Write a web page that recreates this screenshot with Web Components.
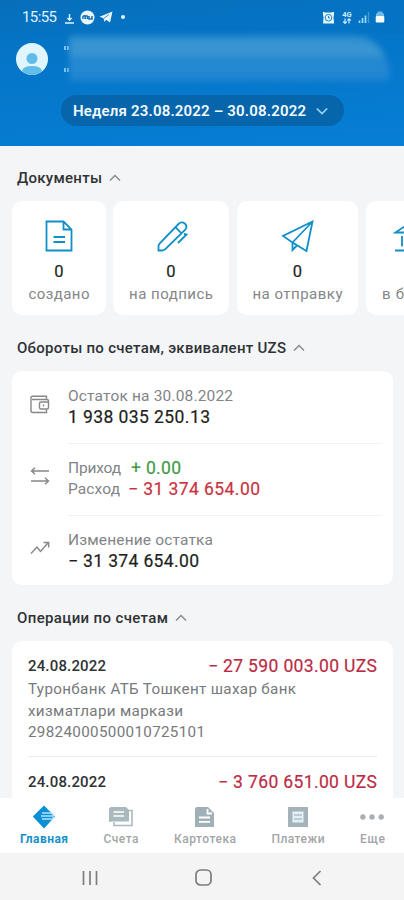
<!DOCTYPE html>
<html lang="ru">
<head>
<meta charset="utf-8">
<title>Главная</title>
<style>
html,body{margin:0;height:100%;overflow:hidden;background:#f3f5f7}
body{font-family:Roboto,"Noto Sans",sans-serif}
</style>
</head>
<body>
<bank-app></bank-app>
<script>
const define=(name,html,after)=>{
  const t=document.createElement('template');t.innerHTML=html;
  customElements.define(name,class extends HTMLElement{
    constructor(){super();this.attachShadow({mode:'open'}).append(t.content.cloneNode(true));}
    connectedCallback(){if(after)after(this,this.shadowRoot);}
  });
};

/* One line of text, tracked so that it spans the width in its "w" attribute. */
define('t-line',`<style>
:host{display:block;white-space:nowrap;flex:none;font-size:var(--s,15.5px);line-height:var(--lh,21px)}
span{display:inline-block;vertical-align:top}
</style><span><slot></slot></span>`,(el,r)=>{
  const w=+el.getAttribute('w'),n=el.textContent.length,s=r.querySelector('span');
  if(w&&n>1){
    s.style.letterSpacing='0px';
    const d=(w-s.getBoundingClientRect().width)/(n-1);
    s.style.letterSpacing=d.toFixed(3)+'px';
    s.style.marginRight=(-d).toFixed(3)+'px';
  }
});

const icons={
  doc:['28 32','<path d="M1.500 1.500h17l8 8v21h-25zM18.500 1.500v8h8M8.500 17h11.500M8.500 22h11.500"/>'],
  pen:['32 32','<path d="M7 30.500H3.500V25.500L5 23 23.500 4Q26.500 1 29.800 3.500Q33 6.500 30 10L10 29.500zM20.500 7.200l6 6.200M29 14l2.500.5-8.500 8.500"/>'],
  plane:['32 32','<path d="M30.500 1.500L1 16l9.500 6.500L24.500 31zM30.500 1.500L10.500 22.500v7.500l4.500-4.500"/>'],
  bank:['34 32','<path d="M1.500 12.500L17 2l15.500 10.500zM8 16v10.500M17 16v10.500M26 16v10.500M1 30.500h32"/>'],
  wallet:['20 19','<path d="M16.500 4.500V1.200H2.500Q1 1.200 1 3v12.500q0 2 2 2h13.500V14M2 4.500h15q1.500 0 1.500 1.500v6.500q0 1.500-1.500 1.500H11q-1.500 0-1.500-1.500V8.500Q9.500 7 11 7h7.500"/><path d="M13.500 9.500v2"/>'],
  swap:['20 18','<path d="M19 4H1.500M5 .8L1.500 4 5 7.200M1 14h17.500M15 10.800l3.500 3.200-3.500 3.200"/>'],
  trend:['20 14','<path d="M1 12.500L7 6l3.500 4.500L18 2M13.500 1.500H18.700V6.500"/>'],
  up:['12 8','<path d="M1 6.500L6 1.500l5 5"/>'],
  down:['12 8','<path d="M.8 1.500L6 6.500l5.200-5"/>'],
  download:['11 12','<path d="M5.500 2v6M3.500 6l2 2.200L7.500 6M1 11h9"/>'],
  chat:['15 15','<circle cx="7.500" cy="7.500" r="7" fill="#e8f7ff" stroke="none"/><path stroke="#1272b8" stroke-width="1.500" d="M3 9V6.500q1.200-1.500 2.200 0V9m0-2.500q1.200-1.500 2.200 0V9M9 6v3h3V6"/>'],
  tg:['14 12','<path fill="#e8f7ff" stroke="none" d="M13.500.5L11 11.500 7 8.700 5.500 11 4.500 7.200.5 5.700z"/><path stroke="#1272b8" stroke-width=".8" d="M5 7.300l5-3.800"/>'],
  alarm:['13 13','<path fill="#dff6ff" stroke="none" d="M1 .8l2.500.7h6L12 .8v3l-.5 2.700.7 6H1l.6-6L1 3.800z"/><circle cx="6.500" cy="6.700" r="3.300" stroke="#1475bc" stroke-width=".9"/><path stroke="#1475bc" stroke-width=".9" d="M6.500 5v2h1.500"/>'],
  arrows:['10 6','<path stroke-width="1.200" d="M3 .5v4.500M1.200 3.500L3 5.300l1.800-1.800M7 5.500V1M5.500 2.500L7 .8l1.800 1.700"/>'],
  signal:['12 12','<path stroke-width="1.700" stroke="#9bdcf5" d="M1.500 12V9.500M4.500 12V7M7.500 12V4.500"/><path stroke="#3f9ad4" d="M10.500 12V1"/>'],
  battery:['10 12','<path fill="#6fbbe6" stroke="none" d="M3 .5h4l1 2h1v3H1v-3h1z"/><rect x=".7" y="5" width="8.600" height="6.500" rx="1" fill="#f4fbff" stroke="none"/>'],
  home:['24 24','<path fill="#0b8fd6" stroke="none" d="M12 .5L23 11.500 12 23.500.800 11.500z"/><path stroke="#b6e2fb" stroke-width="1.400" d="M10 8h8q3 0 4 3.500M9 11h12M10 14h10l2-2"/>'],
  accounts:['24 22','<path fill="#aab9be" stroke="none" d="M1.500 1H17l3 3v11.500H4L0 16V2.500z"/><path stroke="#fff" stroke-width="1.600" d="M4.500 6h10.500M4.500 10h10.500"/><path stroke="#aab9be" stroke-width="1.600" d="M20 4.500h3V19.500H5V16"/>'],
  file:['20 20','<path fill="#9fb0b6" stroke="none" d="M1.500 0H13l6 6v14H0V1.500z"/><path stroke="#fff" stroke-width="1.800" d="M4 10.500h11M4 14.800h11M12.500 2v4.500H17"/>'],
  receipt:['20 20','<path fill="#a3b3b9" stroke="none" d="M0 0h20v20H0z"/><path fill="#e5f0f5" stroke="none" d="M4.500 4.500h11v11h-11z"/><path stroke="#93aab3" stroke-width="1.200" d="M6 8h8M6 12h8"/>'],
  more:['24 6','<g fill="#a9afb2" stroke="none"><circle cx="2.900" cy="3" r="2.700"/><circle cx="12" cy="3" r="2.700"/><circle cx="21.200" cy="3" r="2.700"/></g>'],
  recent:['16 16','<path stroke-width="1.700" d="M1.500 1v14M8 1v14M14.500 1v14"/>'],
  homekey:['17 17','<rect x="1" y="1" width="15" height="15" rx="4.500"/>'],
  back:['10 16','<path d="M8.500 1L1.500 8l7 7"/>'],
  avatar:['32 32','<circle cx="16" cy="16" r="16" fill="#dff5ff" stroke="none"/><g fill="#62bce8" stroke="none"><circle cx="16" cy="15.500" r="5.500"/><path d="M6 28q1-5 10-5t10 5Q16 36 6 28z"/></g>']
};
define('x-icon',`<style>:host{display:block;flex:none}svg{display:block;fill:none;stroke:currentColor;stroke-width:var(--sw,1.4);overflow:visible}</style><div></div>`,(el,r)=>{
  const [box,body]=icons[el.getAttribute('name')],[w,h]=box.split(' ');
  r.querySelector('div').innerHTML=`<svg width="${w}" height="${h}" viewBox="0 0 ${box}">${body}</svg>`;
});

define('status-bar',`<style>
:host{display:flex;align-items:center;height:34px;padding:0 19px 0 22px;box-sizing:border-box;background:#0568b61f;color:#e0f4ff}
t-line{--s:15px}
.g{flex:1}.dot{width:4px;height:4px;border-radius:50%;background:#e8f7ff;margin-left:8px}
.net{display:flex;flex-direction:column;align-items:center;font:700 7.5px/7px Roboto,sans-serif;margin:0 6px 0 7px;color:#c9edfd}
</style><t-line w="35">15:55</t-line><x-icon name="download" style="margin:1px 5px 0 7px"></x-icon><x-icon name="chat"></x-icon><x-icon name="tg" style="margin-left:4px"></x-icon><i class="dot"></i><div class="g"></div><x-icon name="alarm"></x-icon><div class="net">4G<x-icon name="arrows"></x-icon></div><x-icon name="signal"></x-icon><x-icon name="battery" style="margin-left:5px"></x-icon>`);

define('app-header',`<style>
:host{display:block;height:146px;flex:none;color:#f2fbff;background:linear-gradient(175deg,#0670be 0,#0577ca 45%,#067fd5 100%);overflow:hidden}
.user{display:flex;height:50px;padding-left:16px;align-items:center}
.q{margin:0 0 0 16px;display:grid;gap:18px}.q i{height:4px;border:solid #8bc8ef;border-width:0 2px;box-sizing:border-box;width:5px}
.mask{width:321px;height:46px;border-radius:2px 36px 4px 2px/2px 46px 4px 2px;background:linear-gradient(#2f90d0 0,#3c97d2 36%,#2388d0 50%,#2589d4 78%,#1680d0 100%);filter:blur(3px)}
.pill{margin:11px 0 0 61px;width:283px;height:31px;border-radius:16px;background:#0765ab;display:flex;align-items:center;padding-left:12px;box-sizing:border-box}
t-line{--s:15px;font-weight:600;margin-right:10px;position:relative;top:.5px}
</style><status-bar></status-bar><div class="user"><x-icon name="avatar"></x-icon><div class="q"><i></i><i></i></div><div class="mask"></div></div>
<div class="pill"><t-line w="233">Неделя 23.08.2022 – 30.08.2022</t-line><x-icon name="down" style="--sw:1.7;color:#9bd6f8"></x-icon></div>`);

define('section-title',`<style>
:host{display:flex;align-items:center;gap:7px;height:22px;padding-left:17px;color:#303234;font-weight:500;--s:15px}
x-icon{color:#85888b}</style><slot></slot><x-icon name="up"></x-icon>`);

define('doc-card',`<style>
:host{display:flex;flex:none;flex-direction:column;align-items:center;height:114px;padding-top:19px;box-sizing:border-box;background:#fff;border-radius:10px;color:#848688;--s:15px}
x-icon{color:#1090c9;--sw:1.8}
b{font:400 16.5px/20px Roboto,sans-serif;color:#1d1f20;margin:10px 0 2px;-webkit-text-stroke:.2px}
.i{height:32px}
</style><div class="i"></div><b>0</b><slot></slot>`,(el,r)=>{
  r.querySelector('.i').innerHTML=`<x-icon name="${el.getAttribute('icon')}"></x-icon>`;
});

define('balance-row',`<style>
:host{display:flex;height:73px;box-sizing:border-box;padding:15px 0 0 18px;color:#828486}
.ic{width:38px;height:36px;display:flex;align-items:center}
x-icon{color:#858789;--sw:1.4}
.b{flex:1;height:57px;border-bottom:1px solid #f1f2f3;margin-right:12px}
:host([last]) .b{border:0}
</style><div class="ic"></div><div class="b"><slot></slot></div>`,(el,r)=>{
  r.querySelector('.ic').innerHTML=`<x-icon name="${el.getAttribute('icon')}"></x-icon>`;
});

define('white-card',`<style>:host{display:block;margin:0 11px 0 12px;background:#fff;border-radius:10px;box-sizing:border-box}</style><slot></slot>`);

define('operation-row',`<style>
:host{display:block;margin:0 16px 0 16px;padding-top:14px;height:116px;box-sizing:border-box;color:#77797b;--s:15.2px;--lh:21.7px}
.h{display:flex;justify-content:space-between;align-items:center;height:22px;padding:1px 0;color:#303234}
.rule{height:1px;background:#ebecee;margin:11.500px 0 0}
</style><div class="h"><slot name="date"></slot><slot name="sum"></slot></div><slot></slot><div class="rule"></div>`);

define('nav-item',`<style>
:host{display:flex;flex:none;flex-direction:column;align-items:center;color:#a2a6a8;--s:12px;--lh:16px;font-weight:500}
:host([active]){color:#1591c9;font-weight:700}
.i{height:30px;padding-top:1px;box-sizing:border-box;display:flex;align-items:center}
</style><div class="i"></div><slot></slot>`,(el,r)=>{
  r.querySelector('.i').innerHTML=`<x-icon name="${el.getAttribute('icon')}"></x-icon>`;
});

define('tab-bar',`<style>
:host{display:flex;justify-content:space-between;height:55px;flex:none;background:#fff;padding:3px 19px 0 20px;box-sizing:border-box}
</style>
<nav-item icon="home" active><t-line w="48">Главная</t-line></nav-item>
<nav-item icon="accounts"><t-line w="35">Счета</t-line></nav-item>
<nav-item icon="file"><t-line w="62">Картотека</t-line></nav-item>
<nav-item icon="receipt"><t-line w="53">Платежи</t-line></nav-item>
<nav-item icon="more"><t-line w="25">Еще</t-line></nav-item>`);

define('system-keys',`<style>
:host{display:grid;grid-template-columns:180px 47px 1fr;align-items:center;height:47px;flex:none;background:#f4f4f4;color:#7c7c7c;--sw:1.7;padding-top:2px;box-sizing:border-box}
x-icon{justify-self:center}x-icon:last-child{justify-self:start;margin-left:85px}
</style><x-icon name="recent"></x-icon><x-icon name="homekey"></x-icon><x-icon name="back"></x-icon>`);

define('bank-app',`<style>
:host{display:flex;flex-direction:column;width:404px;height:900px;overflow:hidden;background:#f3f5f7}
main{flex:1;min-height:0;overflow:hidden;padding-top:21px}
.docs{display:flex;padding:12px 0 0 12px;overflow:hidden}
.lg{--s:17.5px;color:#1d1f20}.dark{color:#303234}
.line{display:flex;height:21px}
.green{color:#3e9b45}.red{color:#c9343f}
.pay{color:#bb2b44;--s:17.5px}
.lg,.pay,.green,.red{-webkit-text-stroke:.2px}
</style>
<app-header></app-header>
<main>
<section-title><t-line w="85">Документы</t-line></section-title>
<div class="docs">
<doc-card icon="doc" style="width:94px;margin-right:7px"><t-line w="61">создано</t-line></doc-card>
<doc-card icon="pen" style="width:116px;margin-right:8px"><t-line w="84">на подпись</t-line></doc-card>
<doc-card icon="plane" style="width:121px;margin-right:8px"><t-line w="90">на отправку</t-line></doc-card>
<doc-card icon="bank" style="width:90px"><t-line w="58">в банке</t-line></doc-card>
</div>
<section-title style="margin-top:22px"><t-line w="269">Обороты по счетам, эквивалент UZS</t-line></section-title>
<white-card style="margin-top:12px;height:214px">
<balance-row icon="wallet" style="height:72px"><t-line w="165">Остаток на 30.08.2022</t-line><t-line class="lg" w="142">1 938 035 250.13</t-line></balance-row>
<balance-row icon="swap"><div class="line"><t-line w="53">Приход</t-line><t-line class="green" style="--s:17.5px;margin-left:10px" w="50">+ 0.00</t-line></div><div class="line"><t-line w="52">Расход</t-line><t-line class="red" style="--s:17.5px;margin-left:8px" w="132">− 31 374 654.00</t-line></div></balance-row>
<balance-row icon="trend" last style="height:69px;padding-top:14px"><t-line w="145">Изменение остатка</t-line><t-line class="lg" w="131">− 31 374 654.00</t-line></balance-row>
</white-card>
<section-title style="margin-top:22px"><t-line w="151">Операции по счетам</t-line></section-title>
<white-card style="margin-top:12px;height:240px;overflow:hidden">
<operation-row><t-line slot="date" class="dark" w="78" style="--s:15px;font-weight:500">24.08.2022</t-line><t-line slot="sum" class="pay" w="169">− 27 590 003.00 UZS</t-line><t-line w="268">Туронбанк АТБ Тошкент шахар банк</t-line><t-line w="155">хизматлари маркази</t-line><t-line w="177">29824000500010725101</t-line></operation-row>
<operation-row><t-line slot="date" class="dark" w="78" style="--s:15px;font-weight:500">24.08.2022</t-line><t-line slot="sum" class="pay" w="159">− 3 760 651.00 UZS</t-line><t-line w="268">Туронбанк АТБ Тошкент шахар банк</t-line></operation-row>
</white-card>
</main>
<tab-bar></tab-bar>
<system-keys></system-keys>`);
</script>
</body>
</html>
